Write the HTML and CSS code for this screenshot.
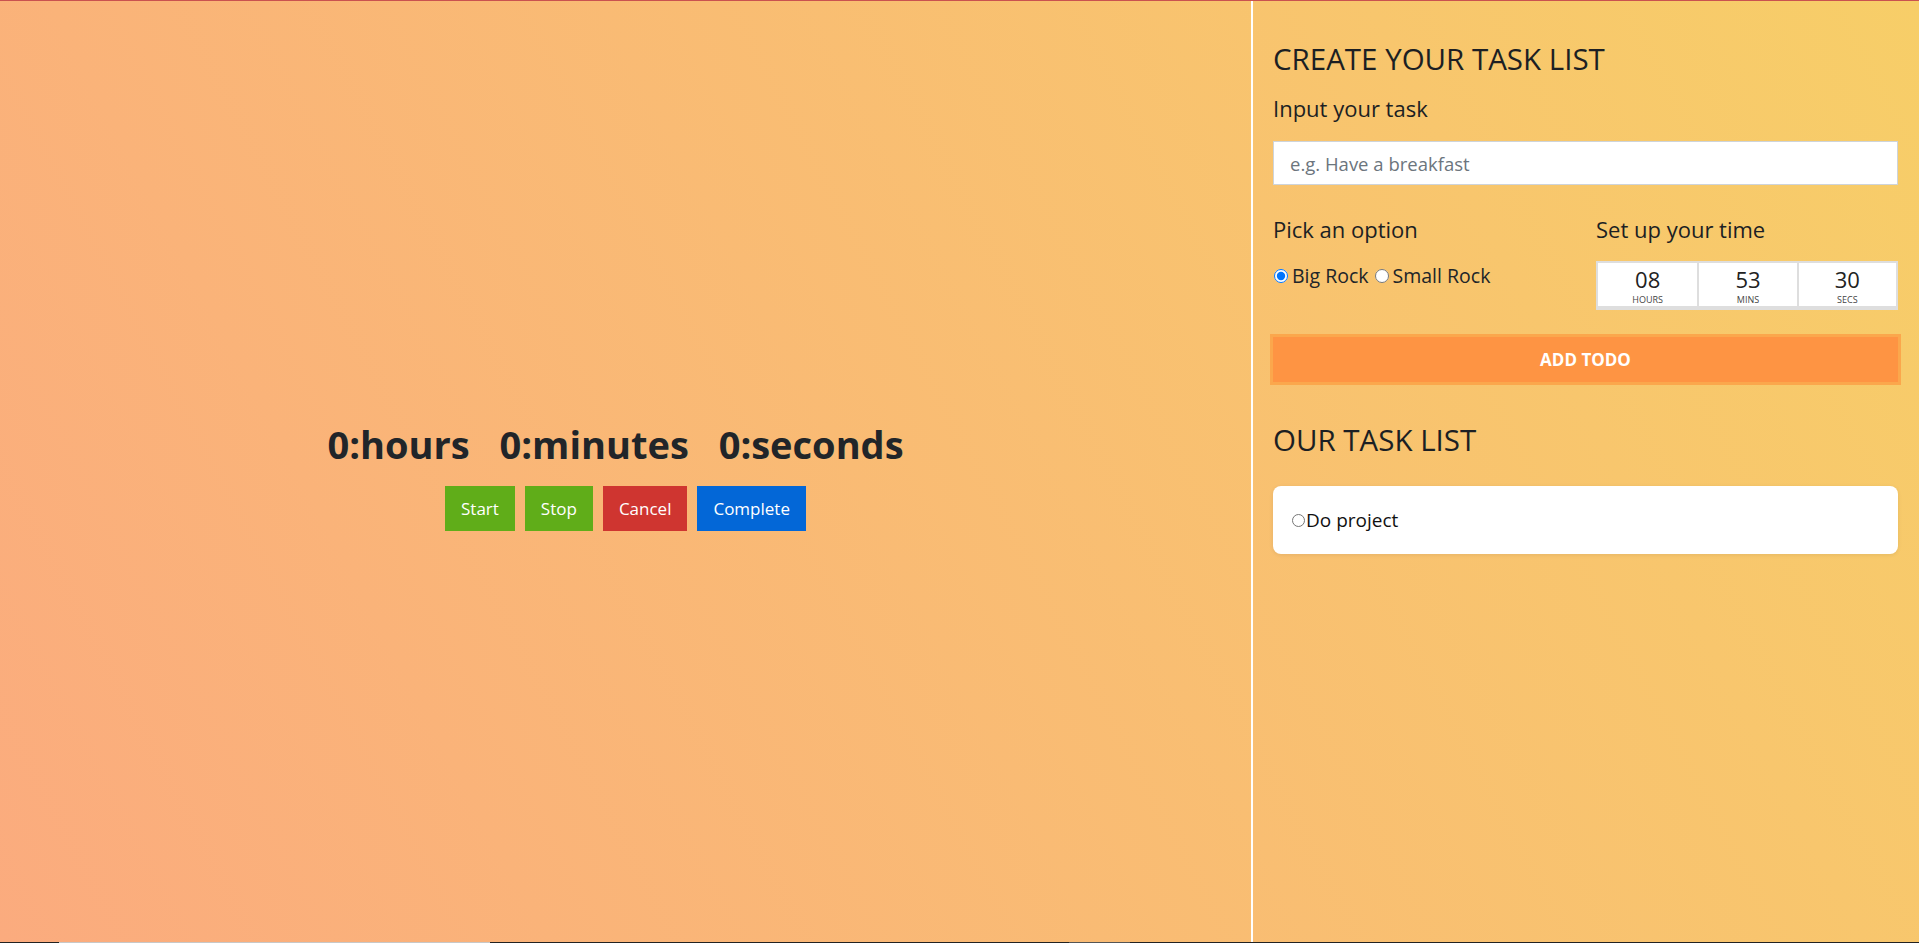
FILE: index.html
```html
<!DOCTYPE html>
<html lang="en">
<head>
<meta charset="utf-8">
<title>Task Timer</title>
<link rel="stylesheet" href="styles.css">
</head>
<body>
<div class="topline"></div>
<div class="app">
  <section class="timer-panel">
    <h1 class="clock"><span class="unit">0:hours</span> <span class="unit">0:minutes</span> <span class="unit">0:seconds</span></h1>
    <div class="controls">
      <button class="btn btn-green">Start</button>
      <button class="btn btn-green">Stop</button>
      <button class="btn btn-red">Cancel</button>
      <button class="btn btn-blue">Complete</button>
    </div>
  </section>
  <div class="divider"></div>
  <aside class="task-panel">
    <h2 class="section-title">CREATE YOUR TASK LIST</h2>
    <h4 class="label">Input your task</h4>
    <input class="task-input" type="text" placeholder="e.g. Have a breakfast">
    <div class="options">
      <div class="opt-col">
        <h4 class="label">Pick an option</h4>
        <div class="radios">
          <label class="radio"><input type="radio" name="rock" checked> Big Rock</label>
          <label class="radio"><input type="radio" name="rock"> Small Rock</label>
        </div>
      </div>
      <div class="opt-col">
        <h4 class="label">Set up your time</h4>
        <div class="time-box">
          <div class="time-cell"><span class="num">08</span><span class="cap">HOURS</span></div>
          <div class="time-cell"><span class="num">53</span><span class="cap">MINS</span></div>
          <div class="time-cell"><span class="num">30</span><span class="cap">SECS</span></div>
        </div>
      </div>
    </div>
    <button class="add-btn">ADD TODO</button>
    <h2 class="section-title list-title">OUR TASK LIST</h2>
    <div class="task-card">
      <label class="task-item"><input type="radio" class="task-radio">Do project</label>
    </div>
  </aside>
</div>
<div class="bottombar"><span class="seg seg-a"></span><span class="seg seg-b"></span></div>
</body>
</html>
```
FILE: styles.css
```css
* { box-sizing: border-box; }
html, body { margin: 0; padding: 0; height: 100%; }
body {
  font-family: "Open Sans", "Noto Sans", sans-serif;
  color: #212529;
  background-color: #fbab7e;
  background-image: linear-gradient(62deg, #fbab7e 0%, #f7ce68 100%);
  overflow: hidden;
  display: flex;
  flex-direction: column;
}
.topline { height: 1px; background: #c9524f; flex: none; }
.app { flex: 1; display: flex; min-height: 0; }
.timer-panel {
  width: 1251px;
  flex: none;
  display: flex;
  flex-direction: column;
  align-items: center;
  justify-content: center;
  padding-top: 7px;
}
.clock {
  margin: 0 0 18px 0;
  font-size: 38px;
  font-weight: 700;
  line-height: 48px;
  white-space: nowrap;
}
.unit { margin-right: 20px; }
.controls { display: flex; gap: 10px; }
.btn {
  border: none;
  border-radius: 0;
  color: #fff;
  font-family: inherit;
  font-size: 17px;
  height: 45px;
  padding: 0 16px;
  cursor: pointer;
}
.btn-green { background: #60ad19; }
.btn-red { background: #cf3530; }
.btn-blue { background: #0367d7; }
.divider { width: 2px; background: #fff; flex: none; }
.task-panel { flex: 1; padding: 41px 21px 0 20px; }
.section-title {
  margin: 0;
  font-size: 29.5px;
  font-weight: 400;
  line-height: 34px;
  color: #1c1f23;
}
.label {
  margin: 0;
  font-size: 22px;
  font-weight: 400;
  line-height: 24px;
  color: #1c1f23;
}
.task-panel > .label { margin-top: 20px; }
.task-input {
  display: block;
  width: 100%;
  height: 44px;
  margin-top: 21px;
  border: 1px solid #ced4da;
  border-radius: 0;
  background: #fff;
  padding: 0 16px;
  font-family: inherit;
  font-size: 18.5px;
}
.task-input::placeholder { color: #6c757d; }
.options {
  display: grid;
  grid-template-columns: 1fr 1fr;
  column-gap: 21px;
  margin-top: 32px;
}
.radios { margin-top: 23px; font-size: 19.5px; line-height: 24px; display: flex; gap: 5px; }
.radio { display: inline-flex; align-items: center; }
.radio input { margin: 0 4px 0 1px; width: 14px; height: 14px; }
.time-box {
  margin-top: 20px;
  display: grid;
  grid-template-columns: 1fr 1fr 1fr;
  border: 2px solid #dedede;
  border-bottom-width: 4px;
  background: #fff;
  height: 49px;
}
.time-cell {
  display: flex;
  flex-direction: column;
  align-items: center;
  justify-content: center;
  border-left: 2px solid #dedede;
  padding-top: 1px;
}
.time-cell:first-child { border-left: none; }
.num { font-size: 22px; line-height: 29px; color: #222; }
.cap { font-size: 9px; line-height: 12px; color: #444; }
.add-btn {
  display: block;
  width: 100%;
  height: 45px;
  margin-top: 27px;
  border: none;
  background: #fe9443;
  box-shadow: 0 0 0 3px #fba74c;
  color: #fff;
  font-family: inherit;
  font-weight: 700;
  font-size: 17px;
}
.list-title { margin-top: 41px; }
.task-card {
  margin-top: 29px;
  background: #fff;
  border-radius: 8px;
  box-shadow: 0 1px 4px rgba(0,0,0,0.08);
  height: 68px;
  display: flex;
  align-items: center;
  padding: 0 19px;
}
.task-item { display: inline-flex; align-items: center; font-size: 19px; color: #111; }
.task-radio { margin: 0 1px 0 0; width: 13px; height: 13px; }
.bottombar { height: 1px; background: #222; flex: none; position: relative; }
.seg { position: absolute; top: 0; height: 1px; }
.seg-a { left: 59px; width: 431px; background: #c8c8c8; }
.seg-b { left: 1069px; width: 61px; background: #555; }
```
